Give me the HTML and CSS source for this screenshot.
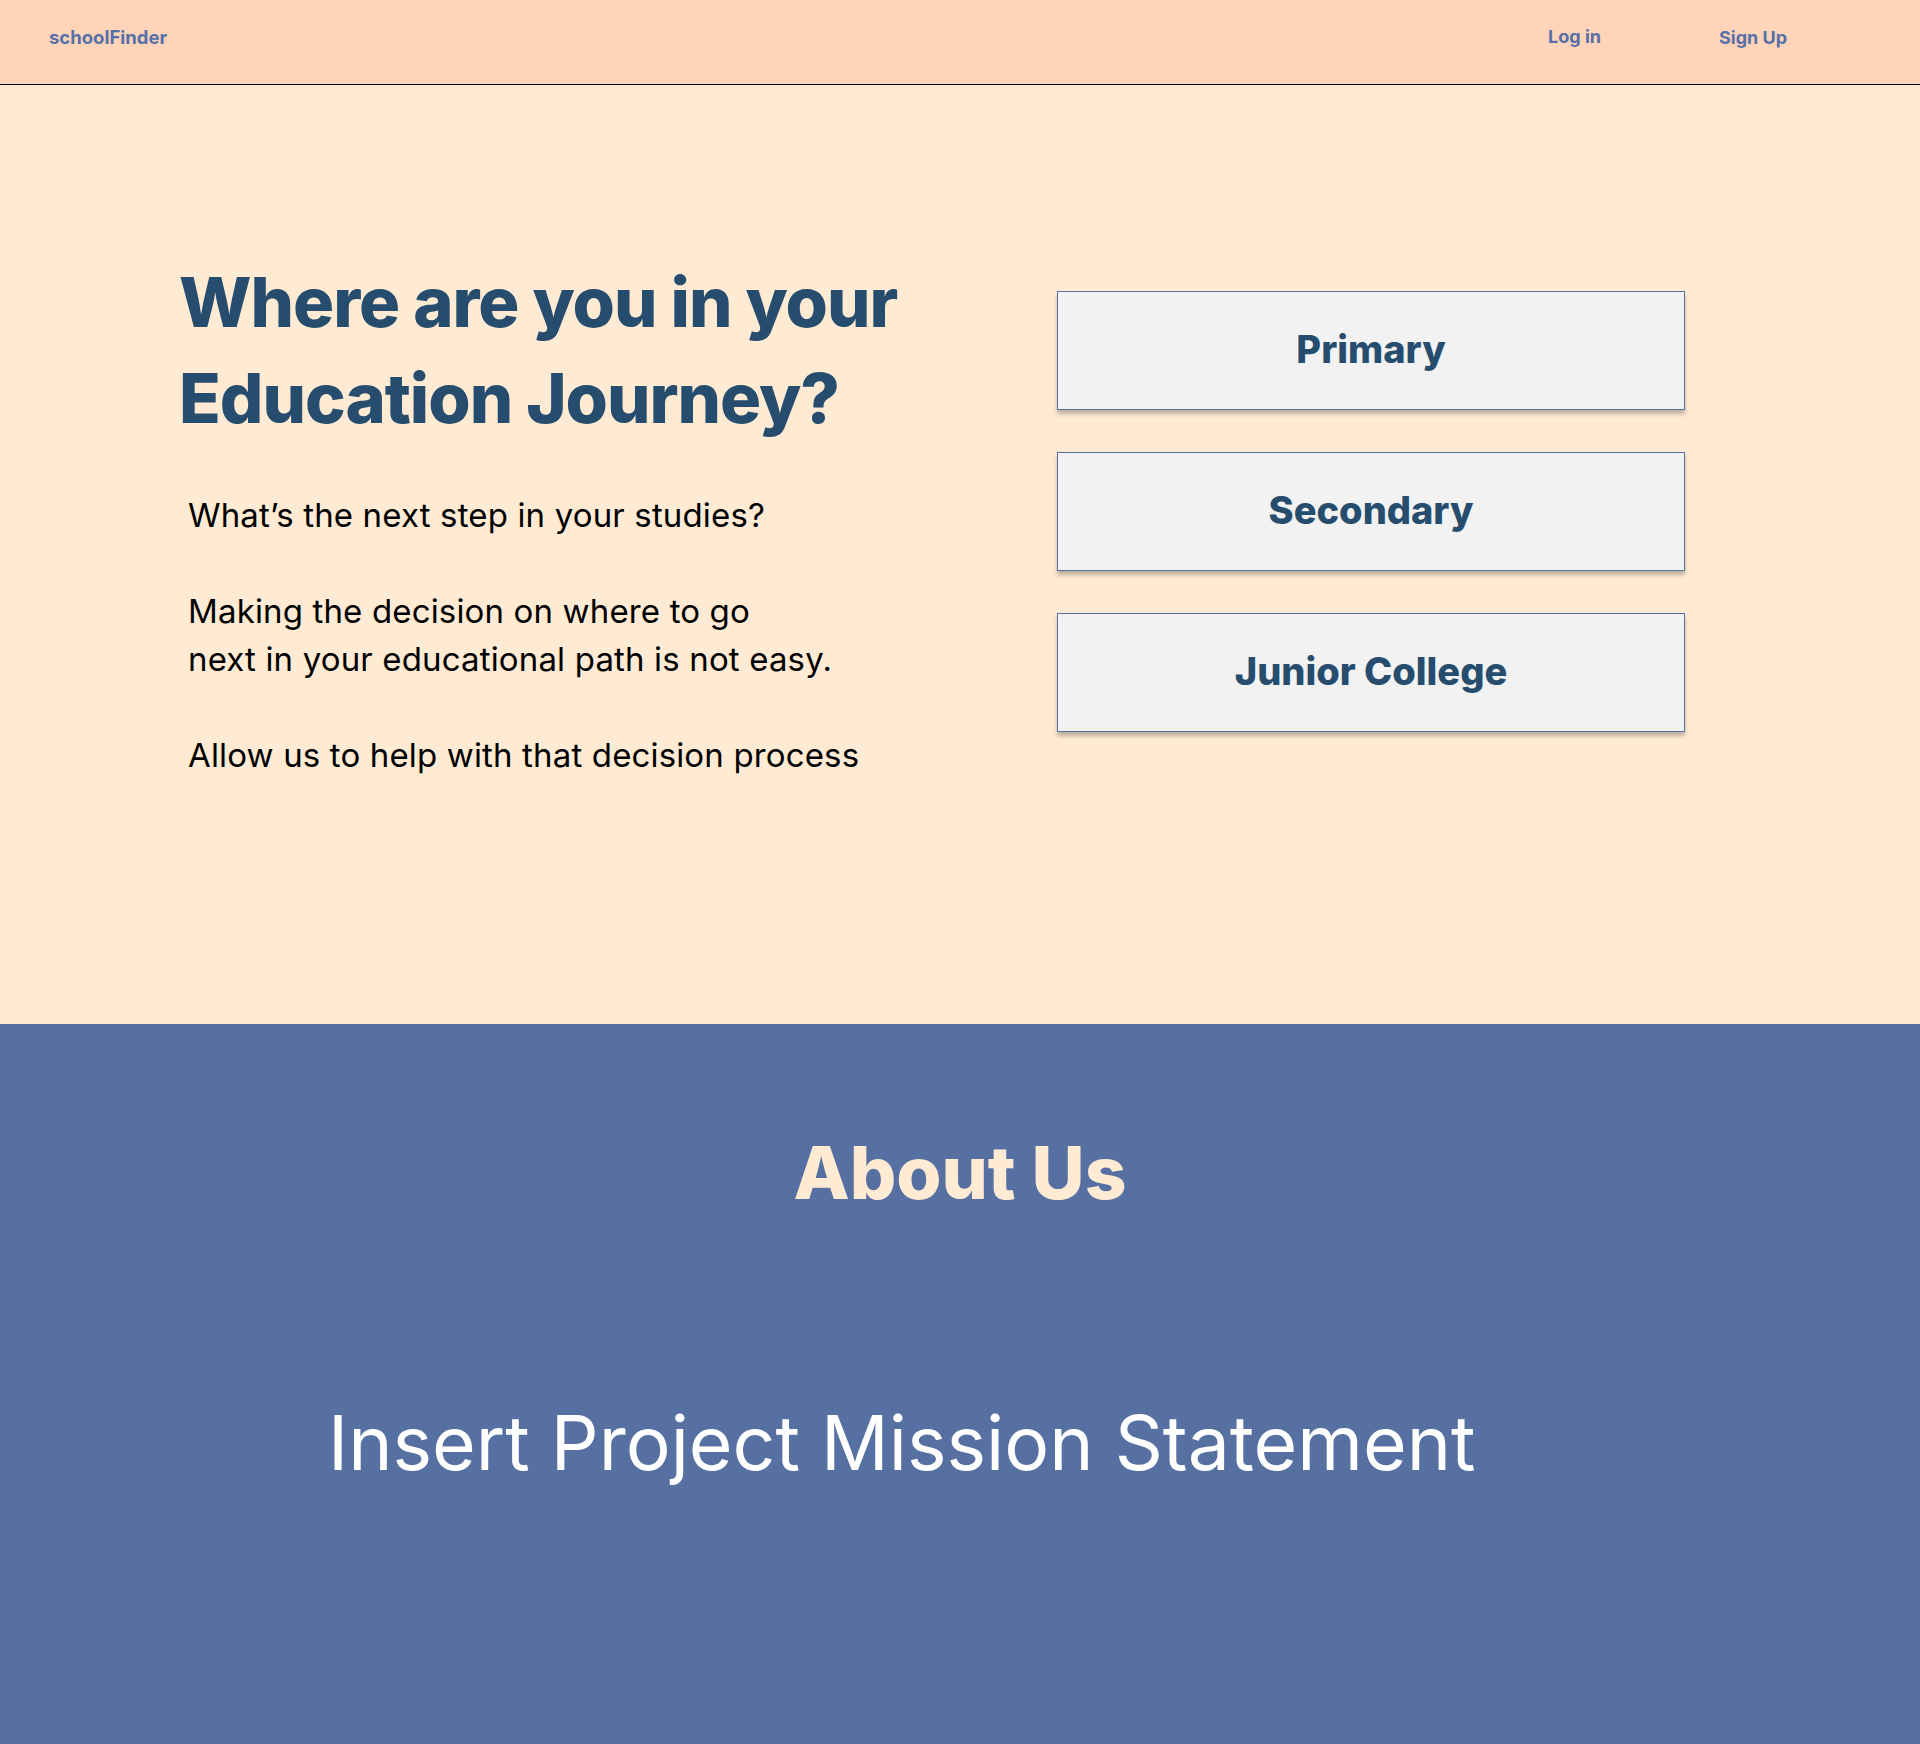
FILE: index.html
```html
<!DOCTYPE html>
<html lang="en">
<head>
<meta charset="utf-8">
<title>schoolFinder</title>
<link rel="stylesheet" href="styles.css">
</head>
<body>
<header class="topbar">
  <div class="brand">schoolFinder</div>
  <nav class="nav">
    <a class="nav-link login" href="#">Log in</a>
    <a class="nav-link signup" href="#">Sign Up</a>
  </nav>
</header>
<section class="hero">
  <div class="hero-text">
    <h1 class="hero-title">Where are you in your<br>Education Journey?</h1>
    <div class="hero-copy">
      <p>What’s the next step in your studies?</p>
      <p>Making the decision on where to go<br>next in your educational path is not easy.</p>
      <p>Allow us to help with that decision process</p>
    </div>
  </div>
  <div class="hero-options">
    <button class="option">Primary</button>
    <button class="option">Secondary</button>
    <button class="option">Junior College</button>
  </div>
</section>
<section class="about">
  <h2 class="about-title">About Us</h2>
  <p class="mission">Insert Project Mission Statement</p>
</section>
</body>
</html>
```
FILE: styles.css
```css
* { box-sizing: border-box; }
html, body { margin: 0; padding: 0; }
body {
  font-family: "Inter", "Noto Sans", sans-serif;
  width: 1920px;
  background: #5770a2;
}
.topbar {
  height: 85px;
  background: #ffd4b8;
  border-bottom: 1px solid #000;
  display: flex;
  align-items: center;
  justify-content: space-between;
  padding: 0 133px 10px 49px;
}
.brand {
  color: #5670a8;
  font-weight: 700;
  font-size: 18.5px;
}
.nav { display: flex; gap: 118px; align-items: center; }
.nav-link {
  color: #5670a8;
  font-weight: 700;
  font-size: 18px;
  text-decoration: none;
}
.login { margin-top: -2px; }
.hero {
  background: #ffebd3;
  height: 939px;
  display: flex;
  padding: 170px 0 0 179px;
}
.hero-text { width: 878px; }
.hero-title {
  margin: 0;
  color: #264d6e;
  font-size: 68.5px;
  line-height: 96px;
  font-weight: 800;
  letter-spacing: -1px;
}
.hero-copy {
  margin: 44px 0 0 9px;
  font-size: 33px;
  line-height: 48px;
  letter-spacing: 0.15px;
  color: #000;
}
.hero-copy p { margin: 0 0 48px; }
.hero-options {
  display: flex;
  flex-direction: column;
  gap: 42px;
  margin-top: 36px;
}
.option {
  width: 628px;
  height: 119px;
  background: #f2f2f2;
  border: 1px solid #5670a8;
  box-shadow: 0 4px 4px rgba(0,0,0,0.25);
  color: #264d6e;
  font-family: "Inter", "Noto Sans", sans-serif;
  font-weight: 800;
  font-size: 38px;
  padding: 0 0 4px;
  cursor: pointer;
}
.about {
  height: 720px;
  padding-top: 94px;
}
.about-title {
  margin: 0;
  text-align: center;
  color: #ffebd3;
  font-size: 73px;
  font-weight: 800;
  line-height: 110px;
}
.mission {
  margin: 160px 0 0 328px;
  color: #fff;
  font-size: 75px;
  font-weight: 400;
  line-height: 110px;
}
```
